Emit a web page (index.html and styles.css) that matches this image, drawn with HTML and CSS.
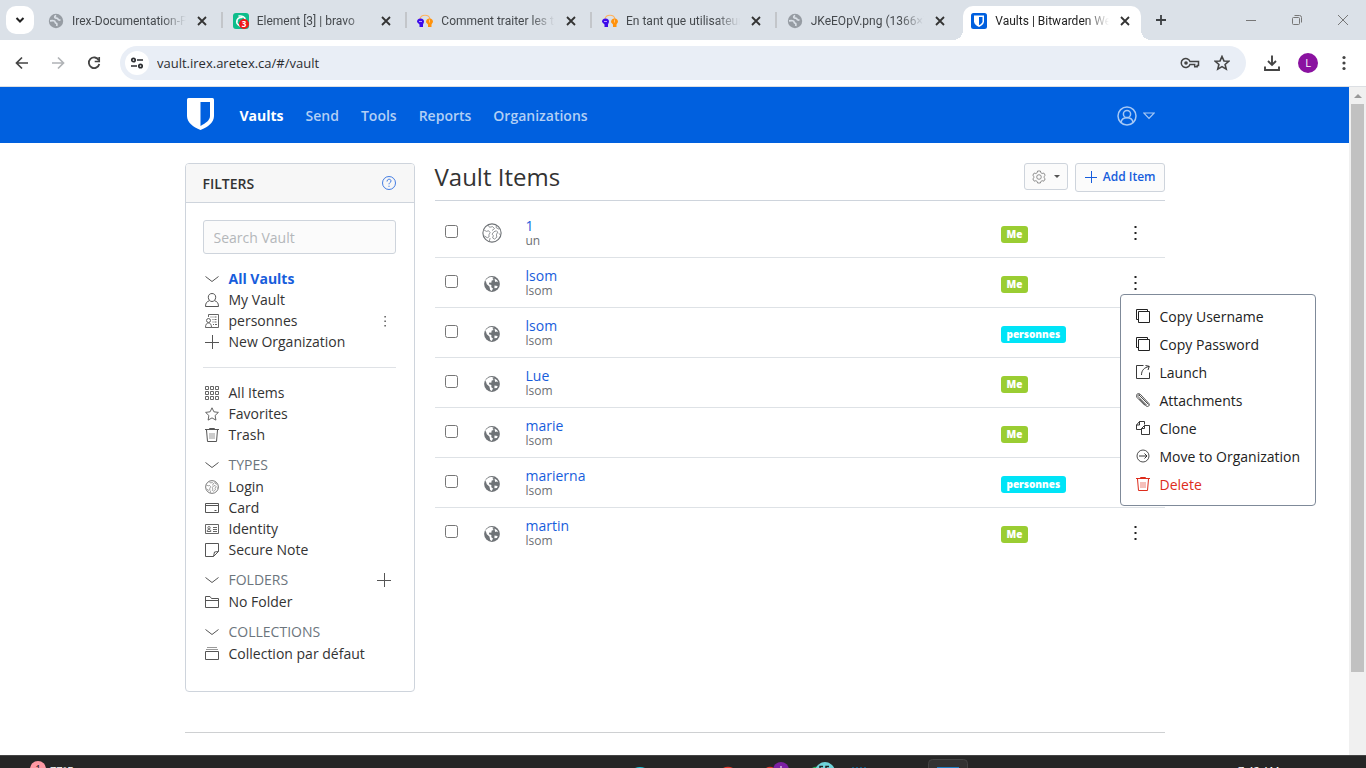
FILE: index.html
```html
<!DOCTYPE html>
<html lang="en">
<head>
<meta charset="utf-8">
<title>Vaults | Bitwarden Web Vault</title>
<link rel="stylesheet" href="styles.css">
</head>
<body>
<svg class="defs" aria-hidden="true">
  <symbol id="close" viewBox="0 0 16 16"><path d="M4 4l8 8M12 4l-8 8" fill="none" stroke="currentColor" stroke-width="1.8"/></symbol>
  <symbol id="web" viewBox="0 0 16 16"><circle cx="8" cy="8" r="7.2" fill="#969ca3"/><path d="M2 7.800c2.500-.2 5-.3 5 1 0 1 .3 1.300 1.300 1.500.9.200.7 1.200.4 2.700M8.200 2.500C7 3 6.300 3.800 7 4.700c.7.800 2.800.2 3 1.400.2 1.200 1.500 1 2.500.7" fill="none" stroke="#dbe1e8" stroke-width="1.700"/></symbol>
  <symbol id="heads" viewBox="0 0 16 16"><path d="M3 6c1-5 9-5 10 0" fill="none" stroke="#ffb25c" stroke-width="1.200"/><path d="M3.500 5.500c2.400 0 3.700 1.300 3.500 3.500L6 11.500v2.600H2.500v-2.600L0 9c0-2.300 1.100-3.500 3.500-3.500z" fill="#3d0bea"/><path d="M12.600 5.500c2.200 0 3.400 1.500 3.400 3.500l-1.500 2.500v2.600H11v-2.600L9 9.200c0-2.300 1.200-3.700 3.600-3.700z" fill="#ff920c"/><path d="M2 8.500h3" stroke="#b998ff"/><path d="M12.500 6.500v3" stroke="#ffc27a"/></symbol>
  <symbol id="globe-s" viewBox="0 0 16 16"><circle cx="8" cy="8" r="7.900" fill="#6f7377"/><path d="M1.200 4.500L4 1.900c1.500-.8 3.300-.9 4.300-.7l1.500.6-1.300.9 1.200 1.200-2 .6-.4 2.300-2-.4-.4 1.900 2.500.7-.1 2.200 1.700 1.400-1.200 2.300-1.600-.9-.8-3.600-2.600-2.100-.7-2.300z" fill="#fff"/><path d="M10.500 2.400l2.600 1.800.9 2-1.700-.8-1.200.5zM10.500 9.500l3.200.6-.7 2-2.600.2z" fill="#fff"/></symbol>
  <symbol id="globe" viewBox="0 0 16 16"><g fill="none" stroke="currentColor"><circle cx="8" cy="8" r="7.300" stroke-width=".9"/><path d="M1.500 5.500l2 1.200 1.800-.5 1.200 1.500-1 1.800.2 1.500-1.500.8-2.300-1.500M5 1.800l1 1.600 2.500-.5L10 4.500 8 6M9.500 7l2-.8 1 1-1 2.300.4 1.800-1.900 1.600-1.500-1 .6-1.900-1.100-1zM11.500 2l-.3 1.600 2.600 1.500M14.700 9.500l-1.400-1.300M6.500 12l-.7 2.700" stroke-width=".6"/></g></symbol>
  <symbol id="down" viewBox="0 0 14 14"><path d="M.5 4.500L7 9.500l6.500-5" fill="none" stroke="currentColor"/></symbol>
  <symbol id="user" viewBox="0 0 14 14"><path d="M7 .5c2.400 0 3.800 1.700 3.700 3.800C10.600 6.700 9 8.500 7 8.500S3.400 6.700 3.300 4.300C3.200 2.200 4.600.5 7 .5zM4.500 7.700C2 8.500.5 9.700.5 13.500h13C13.500 9.700 12 8.500 9.500 7.700" fill="none" stroke="currentColor"/></symbol>
  <symbol id="org" viewBox="0 0 14 14"><g fill="none" stroke="currentColor" stroke-width=".9"><path d="M3.500 3V.5h10v13h-7"/><path d="M5.500 3h1m1 0h1m1 0h2M7.500 5.500h1m1 0h2M7.500 8h1m1 0h2M8 10.500h1m1 0h2"/><circle cx="3.500" cy="6.500" r="2"/><path d="M.5 13.500c0-3 1-4.500 3-4.500s3 1.500 3 4.500z"/></g></symbol>
  <symbol id="plus" viewBox="0 0 14 14"><path d="M0 7.500h14M7.500 0v14" stroke="currentColor"/></symbol>
  <symbol id="grid" viewBox="0 0 14 14"><path d="M.5.5h3v3h-3zM5.500.5h3v3h-3zM10.500.5h3v3h-3zM.5 5.500h3v3h-3zM5.500 5.500h3v3h-3zM10.500 5.500h3v3h-3zM.5 10.500h3v3h-3zM5.500 10.500h3v3h-3zM10.500 10.500h3v3h-3z" fill="none" stroke="currentColor" stroke-width=".9"/></symbol>
  <symbol id="star" viewBox="0 0 14 14"><path d="M7 .8l1.900 4 4.500.6-3.300 3.100.8 4.600L7 10.900l-3.900 2.200.8-4.600L.6 5.400l4.500-.6z" fill="none" stroke="currentColor" stroke-width=".9"/></symbol>
  <symbol id="trash" viewBox="0 0 14 14"><path d="M0 1.500h14M4.500 1V.5h5V1M1.500 2l1 11.500h9l1-11.500" fill="none" stroke="currentColor"/><path d="M5 5v6M7 5v6M9 5v6" stroke="currentColor" stroke-width=".6"/></symbol>
  <symbol id="card" viewBox="0 0 14 14"><path d="M.5 2.500h13v9H.5zM0 4.500h14M9.500 9.500h2" fill="none" stroke="currentColor"/></symbol>
  <symbol id="ident" viewBox="0 0 14 14"><path d="M.5 2.500h13v9H.5zM2.200 9.500c0-1.500.5-2 1.800-2s1.800.5 1.800 2zM8 5.500h4M8 7.500h4M8 9.500h4" fill="none" stroke="currentColor" stroke-width=".9"/><circle cx="4" cy="5.700" r="1.200" fill="none" stroke="currentColor" stroke-width=".8"/></symbol>
  <symbol id="note" viewBox="0 0 14 14"><path d="M8.500 13.500h-8V.5h13v8zM8.500 13.500l1-4.500 4-.5" fill="none" stroke="currentColor"/></symbol>
  <symbol id="folder" viewBox="0 0 14 14"><path d="M.5 12.500v-11h4.500l1.500 2h7v9zM.5 5.500h13" fill="none" stroke="currentColor"/></symbol>
  <symbol id="coll" viewBox="0 0 14 14"><path d="M.5 4.500h13v8H.5z" fill="none" stroke="currentColor"/><path d="M1 2.500h12M2 .5h10" stroke="currentColor" stroke-width=".6"/></symbol>
  <symbol id="dots" viewBox="0 0 16 16"><path d="M7.500 1h2v2h-2zM7.500 7h2v2h-2zM7.500 13h2v2h-2z" fill="currentColor"/></symbol>
  <symbol id="copy" viewBox="0 0 14 14"><path d="M2.500 2.500h11v11h-11zM2.500 10.500h-2V.5h11v2" fill="none" stroke="currentColor"/></symbol>
  <symbol id="launch" viewBox="0 0 14 14"><path d="M7.500.5h-7v13h13v-6M5.500 10c0-5 3-7.500 7.500-8.500M9.500.5L13.300 1.300 12 5" fill="none" stroke="currentColor" stroke-width=".9"/></symbol>
  <symbol id="clip" viewBox="0 0 14 14"><g fill="none" stroke="currentColor" stroke-width=".8"><path d="M3.500 6L10 12.800c2 1.700 4.300-.4 2.800-2.400L4.500 1.500C2-.8-1 2 1 4.500l8 8"/><path d="M2 3.500l8.500 8.500M3 2l9.500 9.500M2 3.500C1.500 2 3 1 4 2.200"/></g></symbol>
  <symbol id="clone" viewBox="0 0 14 14"><path d="M5.500 8.500h-5V4L3.500.5h5v3M3.500.5V4h-3M5.500 7.500l3-3h5v9h-8zM8.500 4.500v3h-3" fill="none" stroke="currentColor" stroke-width=".9"/></symbol>
  <symbol id="move" viewBox="0 0 14 14"><path d="M3 7h8M8.500 4.500L11 7 8.500 9.500" fill="none" stroke="currentColor" stroke-width=".9"/><circle cx="7" cy="7" r="6" fill="none" stroke="currentColor" stroke-width=".8"/></symbol>
</svg>

<div class="tabstrip">
  <button class="tab-search" aria-label="Search tabs"><svg width="10" height="10" viewBox="0 0 10 10"><path d="M1.500 3L5 6.500 8.500 3" fill="none" stroke="#222" stroke-width="2"/></svg></button>
  <div class="tabs">
    <div class="tab"><svg class="fav"><use href="#web"/></svg><span>Irex-Documentation-Plateforme</span><button aria-label="Close tab"><svg><use href="#close"/></svg></button></div>
    <div class="tab"><svg class="fav" viewBox="0 0 16 16"><rect width="16" height="16" rx="3" fill="#0dbd8b"/><path d="M6 3c3-.5 6 1 6.500 4M4 9c-.5-3 2-5 5-4.500M4 7c-1 3 1 5 3 6" fill="none" stroke="#fff" stroke-width="1.500" stroke-linecap="round"/><circle cx="11" cy="11" r="5" fill="#f01818"/><text x="11" y="14" text-anchor="middle" class="fav-count">3</text></svg><span>Element [3] | bravo</span><button aria-label="Close tab"><svg><use href="#close"/></svg></button></div>
    <div class="tab"><svg class="fav"><use href="#heads"/></svg><span>Comment traiter les taches</span><button aria-label="Close tab"><svg><use href="#close"/></svg></button></div>
    <div class="tab"><svg class="fav"><use href="#heads"/></svg><span>En tant que utilisateur, je</span><button aria-label="Close tab"><svg><use href="#close"/></svg></button></div>
    <div class="tab"><svg class="fav"><use href="#web"/></svg><span>JKeEOpV.png (1366×768)</span><button aria-label="Close tab"><svg><use href="#close"/></svg></button></div>
    <div class="tab active"><svg class="fav" viewBox="0 0 16 16"><rect width="16" height="16" rx="2.500" fill="#0060df"/><path d="M3 2.500h10v6c0 2.500-2.500 4.300-5 5.500-2.500-1.200-5-3-5-5.500z" fill="#fff"/><path d="M8 4v8.300c1.900-1 3.500-2.300 3.500-4V4z" fill="#0060df"/></svg><span>Vaults | Bitwarden Web Vault</span><button aria-label="Close tab"><svg><use href="#close"/></svg></button></div>
  </div>
  <button class="new-tab" aria-label="New tab"><svg width="12" height="12" viewBox="0 0 12 12"><path d="M6 1v10M1 6h10" stroke="#3c4043" stroke-width="1.800"/></svg></button>
  <div class="window-buttons">
    <button aria-label="Minimize"><svg width="12" height="12"><path d="M1 6.500h10" stroke="#777"/></svg></button>
    <button aria-label="Restore"><svg width="12" height="12"><rect x="1.500" y="3.500" width="7" height="7" rx="1" fill="none" stroke="#777"/><path d="M3.500 1.500h5q2 0 2 2v5" fill="none" stroke="#777"/></svg></button>
    <button aria-label="Close"><svg width="12" height="12"><path d="M1 1l10 10M11 1L1 11" stroke="#777"/></svg></button>
  </div>
</div>

<div class="toolbar">
  <button aria-label="Back"><svg width="16" height="16" viewBox="0 0 16 16"><path d="M14 8H3M8 2.500L2.500 8 8 13.500" fill="none" stroke="#444" stroke-width="1.700"/></svg></button>
  <button aria-label="Forward"><svg width="16" height="16" viewBox="0 0 16 16"><path d="M2 8h11M8 2.500L13.500 8 8 13.500" fill="none" stroke="#b0b3b6" stroke-width="1.700"/></svg></button>
  <button aria-label="Reload"><svg width="16" height="16" viewBox="0 0 16 16"><path d="M12.800 5.200A5.300 5.300 0 1 0 13.300 9" fill="none" stroke="#444" stroke-width="1.800"/><path d="M13.200 2v4.500H8.700" fill="none" stroke="#444" stroke-width="1.700"/></svg></button>
  <div class="omnibox">
    <button class="site-info" aria-label="Site information"><svg width="14" height="12" viewBox="0 0 14 12"><g fill="none" stroke="#2b2d30" stroke-width="1.700"><circle cx="3.500" cy="3" r="1.700"/><path d="M7 3h6M1 9h6"/><circle cx="10.500" cy="9" r="1.700"/></g></svg></button>
    <input type="text" aria-label="Address" value="vault.irex.aretex.ca/#/vault">
    <svg width="20" height="12" viewBox="0 0 20 12"><path d="M10 4.500h8.500v4h-1.300v1.300h-2.500V7.500H10A4.500 4.500 0 1 1 10 4.500z" fill="none" stroke="#444" stroke-width="1.500"/><circle cx="6" cy="6" r="1.800" fill="#444"/></svg>
    <svg width="16" height="16" viewBox="0 0 14 14"><path d="M7 1.300l1.700 3.900 4.200.3-3.200 2.800 1 4.100L7 10.200l-3.700 2.200 1-4.100L1.100 5.500l4.200-.3z" fill="none" stroke="#444" stroke-width="1.400"/></svg>
  </div>
  <button class="download" aria-label="Downloads"><svg width="18" height="18" viewBox="0 0 18 18"><path d="M9 1.500v9M5 7l4 4 4-4M2 12.500V16h14v-3.500" fill="none" stroke="#444" stroke-width="1.900"/></svg></button>
  <button class="profile" aria-label="Profile">L</button>
  <button class="menu-button" aria-label="Menu"><svg width="4" height="16" viewBox="0 0 4 16"><g fill="#444"><circle cx="2" cy="2.500" r="1.600"/><circle cx="2" cy="8" r="1.600"/><circle cx="2" cy="13.500" r="1.600"/></g></svg></button>
</div>

<div class="viewport">
  <div class="page">
    <header class="navbar">
      <div class="container">
        <a class="logo" href="#/vault" aria-label="Bitwarden"><svg width="27" height="32" viewBox="0 0 27 32"><path d="M1.500 0h24Q27 0 27 1.500V18c0 6.500-6 11-13.500 14C6 29 0 24.500 0 18V1.500Q0 0 1.500 0z" fill="#fff"/><path d="M13.500 4H23v14c0 4-4 7-9.500 10z" fill="#0060df"/></svg></a>
        <nav>
          <a href="#/vault" class="current">Vaults</a><a href="#/sends">Send</a><a href="#/tools">Tools</a><a href="#/reports">Reports</a><a href="#/organizations">Organizations</a>
        </nav>
        <button class="account" aria-label="Account"><svg width="20" height="20" viewBox="0 0 20 20"><g fill="none" stroke="currentColor" stroke-width="1.500"><circle cx="10" cy="10" r="9"/><circle cx="10" cy="8" r="3.600"/><path d="M4 16.500c.5-3.500 2.500-4.700 6-4.700s5.500 1.200 6 4.700"/></g></svg><svg width="12" height="8" viewBox="0 0 12 8"><path d="M.8 1h10.400L6 6.500z" fill="none" stroke="currentColor" stroke-width="1.200"/></svg></button>
      </div>
    </header>

    <main class="container content">
      <aside class="filters">
        <div class="filters-head"><h2>Filters</h2><a href="#/help" aria-label="Help"><svg width="14" height="14" viewBox="0 0 14 14"><circle cx="7" cy="7" r="6.500" fill="none" stroke="currentColor" stroke-width=".8"/><path d="M5 5.500C5 2.500 9 2.600 9 5c0 1.500-2 1.500-2 3.300M7 9.700v1.200" fill="none" stroke="currentColor" stroke-width=".8"/></svg></a></div>
        <div class="filters-body">
          <input type="search" placeholder="Search Vault" aria-label="Search Vault">
          <ul>
            <li class="selected"><svg><use href="#down"/></svg><a href="#all">All Vaults</a></li>
            <li><svg><use href="#user"/></svg><a href="#my">My Vault</a></li>
            <li><svg><use href="#org"/></svg><a href="#org-p">personnes</a><button aria-label="Organization options"><svg viewBox="0 0 14 14"><path d="M6.500 2h1.200v1.500H6.500zM6.500 6.500h1.200V8H6.500zM6.500 11h1.200v1.500H6.500z" fill="#333"/></svg></button></li>
            <li><svg><use href="#plus"/></svg><a href="#new">New Organization</a></li>
          </ul>
          <hr>
          <ul>
            <li><svg><use href="#grid"/></svg><a href="#items">All Items</a></li>
            <li><svg><use href="#star"/></svg><a href="#fav">Favorites</a></li>
            <li><svg><use href="#trash"/></svg><a href="#trashed">Trash</a></li>
          </ul>
          <h3><svg><use href="#down"/></svg>Types</h3>
          <ul>
            <li><svg><use href="#globe"/></svg><a href="#login">Login</a></li>
            <li><svg><use href="#card"/></svg><a href="#cards">Card</a></li>
            <li><svg><use href="#ident"/></svg><a href="#identity">Identity</a></li>
            <li><svg><use href="#note"/></svg><a href="#notes">Secure Note</a></li>
          </ul>
          <h3><svg><use href="#down"/></svg>Folders<button aria-label="Add folder"><svg><use href="#plus"/></svg></button></h3>
          <ul><li><svg><use href="#folder"/></svg><a href="#nofolder">No Folder</a></li></ul>
          <h3><svg><use href="#down"/></svg>Collections</h3>
          <ul><li><svg><use href="#coll"/></svg><a href="#collection">Collection par défaut</a></li></ul>
        </div>
      </aside>

      <section class="vault">
        <div class="vault-head">
          <h1>Vault Items</h1>
          <button class="btn gear" aria-label="Options"><svg width="14" height="14" viewBox="0 0 14 14"><g fill="none" stroke="#777" stroke-width=".8"><path d="M5.600 1h2.800l.4 1.700 1.300.8 1.700-.5 1.400 2.400L12 6.500v1.200l1.200 1.100-1.400 2.400-1.700-.5-1.300.8L8.400 13H5.600l-.4-1.500-1.300-.8-1.700.5-1.400-2.400L2 7.700V6.500L.8 5.400 2.200 3l1.700.5 1.300-.8z"/><circle cx="7" cy="7" r="2.300"/></g></svg><svg width="6" height="3" viewBox="0 0 6 3"><path d="M0 0h6L3 3z" fill="#555"/></svg></button>
          <button class="btn add"><svg width="12" height="12" viewBox="0 0 12 12"><path d="M0 6.500h12M6.500 0v12" stroke="currentColor"/></svg>Add Item</button>
        </div>
        <table>
          <tbody>
            <tr><td class="check"><input type="checkbox" aria-label="Select 1"></td><td class="kind"><svg class="big"><use href="#globe"/></svg></td><td><a href="#i1">1</a><small>un</small></td><td class="owner"><span class="badge">Me</span></td><td class="options"><button aria-label="Options"><svg><use href="#dots"/></svg></button></td></tr>
            <tr><td class="check"><input type="checkbox" aria-label="Select lsom"></td><td class="kind"><svg><use href="#globe-s"/></svg></td><td><a href="#i2">lsom</a><small>lsom</small></td><td class="owner"><span class="badge">Me</span></td><td class="options">
              <div class="dropdown"><button aria-label="Options"><svg><use href="#dots"/></svg></button>
                <div class="menu">
                  <button><svg><use href="#copy"/></svg>Copy Username</button>
                  <button><svg><use href="#copy"/></svg>Copy Password</button>
                  <button><svg><use href="#launch"/></svg>Launch</button>
                  <button><svg><use href="#clip"/></svg>Attachments</button>
                  <button><svg><use href="#clone"/></svg>Clone</button>
                  <button><svg><use href="#move"/></svg>Move to Organization</button>
                  <button class="danger"><svg><use href="#trash"/></svg>Delete</button>
                </div>
              </div></td></tr>
            <tr><td class="check"><input type="checkbox" aria-label="Select lsom"></td><td class="kind"><svg><use href="#globe-s"/></svg></td><td><a href="#i3">lsom</a><small>lsom</small></td><td class="owner"><span class="badge org">personnes</span></td><td class="options"><button aria-label="Options"><svg><use href="#dots"/></svg></button></td></tr>
            <tr><td class="check"><input type="checkbox" aria-label="Select Lue"></td><td class="kind"><svg><use href="#globe-s"/></svg></td><td><a href="#i4">Lue</a><small>lsom</small></td><td class="owner"><span class="badge">Me</span></td><td class="options"><button aria-label="Options"><svg><use href="#dots"/></svg></button></td></tr>
            <tr><td class="check"><input type="checkbox" aria-label="Select marie"></td><td class="kind"><svg><use href="#globe-s"/></svg></td><td><a href="#i5">marie</a><small>lsom</small></td><td class="owner"><span class="badge">Me</span></td><td class="options"><button aria-label="Options"><svg><use href="#dots"/></svg></button></td></tr>
            <tr><td class="check"><input type="checkbox" aria-label="Select marierna"></td><td class="kind"><svg><use href="#globe-s"/></svg></td><td><a href="#i6">marierna</a><small>lsom</small></td><td class="owner"><span class="badge org">personnes</span></td><td class="options"><button aria-label="Options"><svg><use href="#dots"/></svg></button></td></tr>
            <tr><td class="check"><input type="checkbox" aria-label="Select martin"></td><td class="kind"><svg><use href="#globe-s"/></svg></td><td><a href="#i7">martin</a><small>lsom</small></td><td class="owner"><span class="badge">Me</span></td><td class="options"><button aria-label="Options"><svg><use href="#dots"/></svg></button></td></tr>
          </tbody>
        </table>
      </section>
    </main>
    <footer class="container"><hr></footer>
  </div>
  <div class="scrollbar"><svg width="8" height="4" viewBox="0 0 8 4"><path d="M4 0l4 4H0z" fill="#999"/></svg><div class="thumb"></div></div>
</div>

<div class="taskbar">
  <div class="weather"><span class="alert">1</span><span class="temp">77°F</span></div>
  <div class="apps">
    <svg width="333" height="12" viewBox="0 0 333 12"><path d="M0 12q5-2 10 0z" fill="#1cc5dc"/><path d="M88 12q5-2.500 10 0zM131 12q4-2.500 8 0z" fill="#e23b2e"/><path d="M177 12q3-2 6-1v1z" fill="#22b45a"/><circle cx="146" cy="14" r="8" fill="#7b1fa2"/><path d="M146 10v2" stroke="#fff"/><circle cx="190" cy="16" r="10" fill="#6fd3da"/><path d="M188 10.500h-3v2M194 10.500h-3v2" fill="none" stroke="#222" stroke-width="1.500"/><path d="M217 11.500h2m2 0h2m2 0h2m2 0h2" stroke="#0d5c85"/><rect x="293.500" y="3.500" width="39" height="20" rx="4" fill="#323232" stroke="#444"/><path d="M302 11.500h22" stroke="#1d7fc4"/></svg>
  </div>
  <time class="clock">7:42 AM</time>
</div>
</body>
</html>
```
FILE: styles.css
```css
* { box-sizing: border-box; }

body {
  margin: 0;
  height: 100vh;
  display: flex;
  flex-direction: column;
  overflow: hidden;
  background: #fff;
  color: #333;
  font: 14px/21px "Open Sans", "Noto Sans", sans-serif;
}

.defs { display: none; }
svg { display: block; flex: none; }
button { border: 0; padding: 0; background: none; font: inherit; color: inherit; }
a { color: inherit; text-decoration: none; }
h1, h2, h3, ul { margin: 0; padding: 0; font-weight: 400; list-style: none; }

/* Browser tabs */
.tabstrip {
  flex: none;
  height: 40px;
  display: flex;
  background: #dbe1e8;
  padding-left: 6px;
  font: 12px/16px Roboto, sans-serif;
}
.tab-search {
  flex: none;
  width: 28px;
  height: 28px;
  margin-top: 6px;
  border-radius: 10px;
  background: #fff;
  display: grid;
  place-items: center;
}
.tabs { flex: 0 1 1101px; min-width: 0; display: flex; gap: 7px; margin: 6px 0 0 6px; }
.tab {
  position: relative;
  flex: 1 1 0;
  min-width: 0;
  height: 34px;
  padding: 0 8px 5px;
  display: flex;
  align-items: center;
  gap: 8px;
  color: #45494d;
}
.tab::after {
  content: "";
  position: absolute;
  right: -5px;
  top: 6px;
  width: 2px;
  height: 16px;
  background: #c3c6ca;
}
.tab:nth-last-child(2)::after { display: none; }
.tab span {
  flex: 1;
  min-width: 0;
  overflow: hidden;
  white-space: nowrap;
  -webkit-mask-image: linear-gradient(to left, transparent, #000 24px);
  mask-image: linear-gradient(to left, transparent, #000 24px);
}
.tab svg { width: 16px; height: 16px; }
.tab button svg { color: #333; }
.fav-count { font: 700 8px "Open Sans", sans-serif; fill: #fff; }
.tab.active { background: #fff; border-radius: 10px 10px 0 0; color: #222; }
.tab.active::before, .tab.active::after {
  content: "";
  position: absolute;
  top: auto;
  right: auto;
  bottom: 0;
  width: 10px;
  height: 10px;
}
.tab.active::before { left: -10px; background: radial-gradient(circle at 0 0, #dbe1e8 10px, #fff 10px); }
.tab.active::after { left: 100%; background: radial-gradient(circle at 100% 0, #dbe1e8 10px, #fff 10px); }
.new-tab { width: 40px; display: grid; place-items: center; }
.window-buttons { margin-left: auto; display: flex; }
.window-buttons button { width: 46px; display: grid; place-items: center; }

/* Browser toolbar */
.toolbar {
  flex: none;
  height: 47px;
  display: flex;
  align-items: center;
  padding: 0 12px 0 4px;
  border-bottom: 1px solid #dcdfe3;
  background: #fff;
}
.toolbar > button { width: 36px; height: 36px; display: grid; place-items: center; }
.omnibox {
  flex: 1;
  height: 34px;
  margin-left: 8px;
  padding: 0 16px 0 5px;
  border-radius: 17px;
  background: #e9eef6;
  display: flex;
  align-items: center;
  gap: 14px;
}
.site-info {
  width: 24px;
  height: 24px;
  border-radius: 50%;
  background: #fff;
  display: grid;
  place-items: center;
}
.omnibox input {
  flex: 1;
  min-width: 0;
  margin-left: -6px;
  padding: 0;
  border: 0;
  background: none;
  color: #2b2d30;
  font: 13px/20px "Open Sans", sans-serif;
}
.toolbar > .download { margin-left: 8px; }
.toolbar > .profile {
  width: 20px;
  height: 20px;
  margin: 0 8px;
  border-radius: 50%;
  background: #8a12a0;
  color: #fff;
  font-size: 11px;
  line-height: 20px;
}
.toolbar > .menu-button { width: 20px; margin-left: 8px; }

/* Web page */
.viewport { flex: 1; min-height: 0; display: flex; overflow: hidden; }
.page { flex: 1; min-width: 0; }
.container { width: 100%; max-width: 980px; margin: 0 auto; }
.navbar { background: #0060df; }
.navbar .container { height: 56px; display: flex; align-items: center; padding: 0 10px 2px 2px; }
.navbar nav { display: flex; gap: 22px; margin-left: 26px; padding-top: 2px; }
.navbar nav a { color: #b2cff5; font-weight: 600; }
.navbar nav a.current { color: #fff; font-weight: 700; }
.navbar .account { margin-left: auto; display: flex; align-items: center; gap: 6px; padding-top: 4px; color: #a6c8f5; }

.content { display: grid; grid-template-columns: 230px 1fr; gap: 20px; padding-top: 20px; align-items: start; }

.filters { border: 1px solid #ced4dc; border-radius: 4px; }
.filters-head {
  display: flex;
  align-items: center;
  justify-content: space-between;
  height: 39px;
  padding: 0 18px 0 17px;
  border-bottom: 1px solid #ced4dc;
  border-radius: 3px 3px 0 0;
  background: #f7f7f7;
}
.filters-head h2 { font-size: 14px; font-weight: 600; text-transform: uppercase; }
.filters-head a { color: #175ddc; }
.filters-body { padding: 17px 18px 27px 17px; }
.filters-body input {
  display: block;
  width: 100%;
  height: 34px;
  margin-bottom: 14px;
  padding: 0 10px;
  border: 1px solid #ced4dc;
  border-radius: 3px;
  background: #fbfbfb;
  font: inherit;
}
.filters-body input::placeholder { color: #b4b7ba; opacity: 1; }
.filters-body li, .filters-body h3 { display: flex; align-items: center; gap: 10px; padding-left: 2px; }
.filters-body svg { width: 14px; height: 14px; color: #555; }
.filters-body li button { margin-left: auto; padding-right: 4px; }
.filters-body h3 button { margin-left: auto; padding-right: 5px; }
.filters-body h3 { margin-top: 9px; padding-bottom: 1px; font-size: 14px; color: #6c757d; text-transform: uppercase; }
.filters-body hr { margin: 15px 0 14px; }
.filters-body .selected { color: #175ddc; font-weight: 700; }
hr { height: 1px; border: 0; background: #dfe2e6; }

.vault-head {
  display: flex;
  align-items: flex-start;
  gap: 7px;
  height: 38px;
  margin-bottom: 6px;
  border-bottom: 1px solid #ced4dc;
}
.vault-head h1 { flex: 1; font-size: 24px; line-height: 28px; }
.btn {
  display: flex;
  align-items: center;
  border: 1px solid #ced4dc;
  border-radius: 3px;
  background: #fbfbfb;
  font-size: 12px;
  font-weight: 600;
}
.gear { height: 27px; padding: 0 7px; gap: 8px; }
.add { height: 29px; padding: 0 8px 2px 9px; gap: 6px; color: #175ddc; }

table { width: 100%; border-collapse: collapse; table-layout: fixed; }
td { height: 50px; padding: 0 0 0 9px; border-bottom: 1px solid #dee2e6; vertical-align: middle; }
tr:last-child td { border-bottom: 0; }
td a { display: block; line-height: 18px; color: #175ddc; }
small { display: block; font-size: 12px; line-height: 12px; color: #6c6f73; }
.check { width: 32px; padding-left: 10px; }
.check input { display: block; width: 13px; height: 13px; margin: 0 0 1px; }
.kind { width: 50px; padding: 3px 0 0; }
.kind svg { width: 16px; height: 16px; margin: 0 auto; color: #6f7377; }
.kind .big { width: 20px; height: 20px; }
.owner { width: 113px; padding-top: 5px; }
.badge {
  display: block;
  width: max-content;
  padding: 0 6px;
  border-radius: 3px;
  background: #9acd32;
  color: #fff;
  font-size: 10px;
  font-weight: 800;
  line-height: 17px;
}
.badge.org { background: #00e4f7; }
.options { width: 60px; padding: 2px 0 0; }
.options button { display: block; margin: 0 auto; color: #222; }
.options svg { width: 16px; height: 16px; }

.dropdown { position: relative; }
.menu {
  position: absolute;
  z-index: 2;
  top: 19px;
  left: 15px;
  width: 196px;
  padding: 7px 0;
  border: 1px solid #7f8a99;
  border-radius: 4px;
  background: #fff;
}
.options .menu button {
  display: flex;
  align-items: center;
  gap: 10px;
  width: 100%;
  height: 28px;
  padding-left: 15px;
  white-space: nowrap;
}
.menu svg { width: 14px; height: 14px; }
.options .menu svg { width: 14px; height: 14px; }
.options .menu .danger { color: #dd2c1c; }

footer { padding-top: 40px; }
footer hr { margin: 0; background: #ced0d2; }

.scrollbar { flex: none; width: 17px; background: #f0f0f0; padding-top: 7px; }
.scrollbar svg { margin: 0 auto; }
.thumb { width: 13px; height: 86%; margin: 6px auto 0; background: #c1c1c1; }

/* Desktop taskbar, mostly below the screen edge */
.taskbar {
  flex: none;
  height: 13px;
  overflow: hidden;
  display: grid;
  grid-template-columns: 605px 1fr 128px;
  padding-left: 30px;
  border-top: 1px solid #444;
  background: #262626;
  color: #fff;
  font-size: 11px;
}
.weather { display: flex; align-items: flex-start; gap: 4px; }
.alert {
  width: 16px;
  height: 16px;
  margin-top: 5px;
  border-radius: 50%;
  background: #ff99a4;
  color: #222;
  font-size: 10px;
  line-height: 16px;
  text-align: center;
}
.temp, .clock { padding-top: 4px; }
```
